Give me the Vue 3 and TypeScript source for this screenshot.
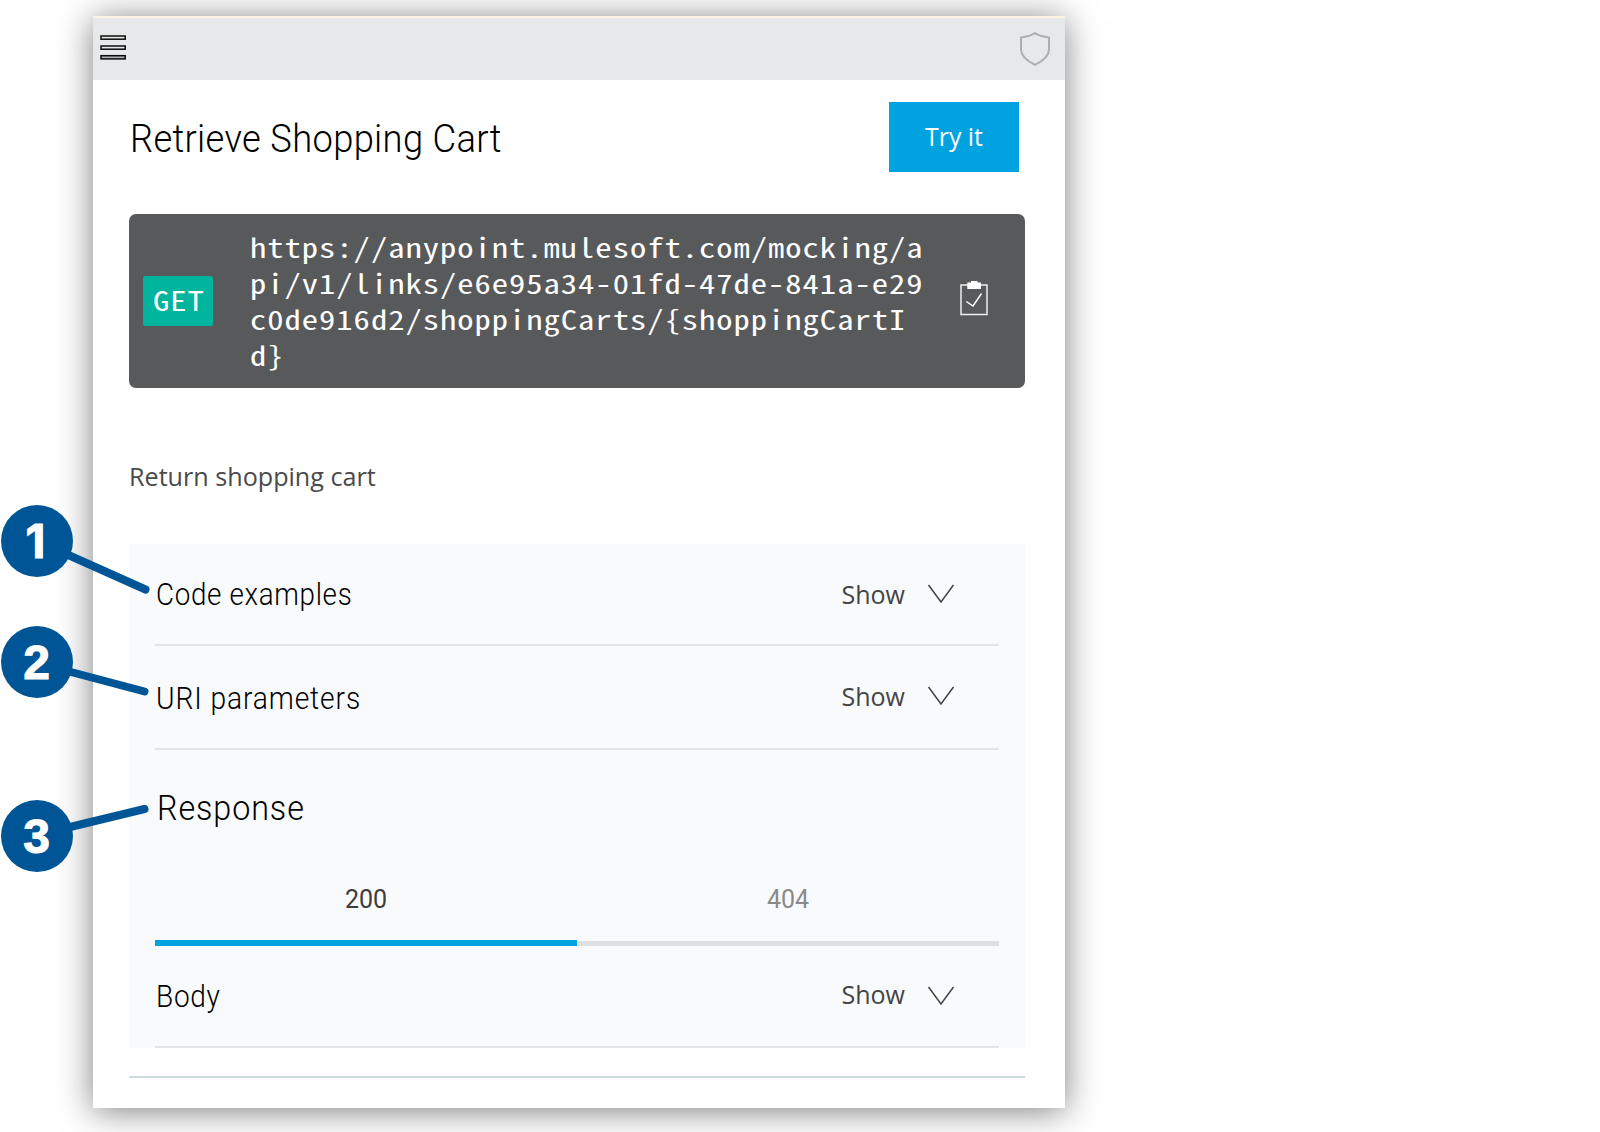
<script setup lang="ts">
interface Callout {
  label: string
  x: number
  y: number
  y1: number
  x2: number
  y2: number
}

const callouts: Callout[] = [
  { label: '1', x: 35.5, y: 541, y1: 541, x2: 145.5, y2: 589.5 },
  { label: '2', x: 36.5, y: 662, y1: 663, x2: 144.5, y2: 691.5 },
  { label: '3', x: 36.5, y: 836, y1: 835, x2: 144.5, y2: 809 },
]

const sections: { title: string; kind: string }[] = [
  { title: 'Code examples', kind: 'code' },
  { title: 'URI parameters', kind: 'params' },
]

const uri =
  'https://anypoint.mulesoft.com/mocking/api/v1/links/e6e95a34-01fd-47de-841a-e29c0de916d2/shoppingCarts/{shoppingCartId}'
</script>

<template>
  <div class="page">
    <main class="card">
      <header class="topbar">
        <svg class="menu" width="27" height="26" viewBox="0 0 27 26">
          <g fill="#e4e8e6" stroke="#0c0c0c" stroke-width="1.5">
            <rect x="1" y="1" width="24.2" height="3.2" />
            <rect x="1" y="11" width="24.2" height="3.2" />
            <rect x="1" y="20.7" width="24.2" height="3.2" fill="#b0b3b2" />
          </g>
        </svg>
        <svg class="shield" width="32" height="36" viewBox="0 0 32 36">
          <path
            d="M16 1.2C12 3.8 7 5 2 5.6V17.6C2 24.5 8 29 16 32.8C24 29 30 24.5 30 17.6V5.6C25 5 20 3.8 16 1.2Z"
            fill="none" stroke="#aeaeae" stroke-width="2"
          />
        </svg>
      </header>

      <div class="heading">
        <h1>Retrieve Shopping Cart</h1>
        <button class="try">Try it</button>
      </div>

      <div class="request">
        <span class="method"><span class="verb">GET</span></span>
        <code class="uri">{{ uri }}</code>
        <svg class="clip" width="28" height="36" viewBox="0 0 28 36">
          <rect x="1" y="5" width="26" height="29.5" fill="none" stroke="#eee" stroke-width="1.5" />
          <path d="M7.3 2.5H11V1H17.5V2.5H21V9H7.3Z" fill="#fff" />
          <path d="M6.3 21.5L13 26L21.5 13.5" fill="none" stroke="#fff" stroke-width="1.5" />
        </svg>
      </div>

      <p class="description">Return shopping cart</p>

      <section class="panel">
        <div v-for="s in sections" :key="s.kind" class="row" :class="s.kind">
          <h3>{{ s.title }}</h3>
          <span class="show">Show</span>
          <svg class="chevron" width="28" height="20" viewBox="0 0 28 20">
            <path d="M1.5 1L14 18L26.5 1" fill="none" stroke="#444" stroke-width="1.5" />
          </svg>
        </div>
        <h2>Response</h2>
        <div class="tabs">
          <div class="tab active">200</div>
          <div class="tab">404</div>
        </div>
        <div class="row body">
          <h3>Body</h3>
          <span class="show">Show</span>
          <svg class="chevron" width="28" height="20" viewBox="0 0 28 20">
            <path d="M1.5 1L14 18L26.5 1" fill="none" stroke="#444" stroke-width="1.5" />
          </svg>
        </div>
      </section>
      <hr class="end" />
    </main>

    <svg class="callouts" width="160" height="1132" viewBox="0 0 160 1132">
      <g v-for="c in callouts" :key="c.label">
        <line x1="37" :y1="c.y1" :x2="c.x2" :y2="c.y2" />
        <circle cx="37" :cy="c.y" r="36" />
        <text :x="c.x" :y="c.y + 17" :class="'n' + c.label">{{ c.label }}</text>
      </g>
    </svg>
  </div>
</template>

<style>
body {
  margin: 0;
  background: #fff;
}
</style>

<style scoped>
.page {
  position: relative;
  box-sizing: border-box;
  width: 1600px;
  height: 1132px;
  padding: 16px 0 0 93px;
  overflow: hidden;
  background: #fff;
}
.card {
  box-sizing: border-box;
  width: 972px;
  height: 1092px;
  background: #fff;
  box-shadow: 0 3px 32px rgba(0, 0, 0, 0.5);
}
.topbar {
  box-sizing: border-box;
  height: 64px;
  border-top: 2px solid #fcf3e0;
  background: #e7e8ea;
  display: flex;
  justify-content: space-between;
  align-items: flex-start;
  padding: 14px 14px 0 7px;
}
.menu {
  margin-top: 3px;
}
.heading {
  display: flex;
  justify-content: space-between;
  align-items: flex-start;
  padding: 22px 46px 0 36px;
  height: 112px;
}
h1,
h2,
h3,
p {
  margin: 0;
  white-space: nowrap;
}
h1,
h2,
h3 {
  font-family: Roboto, sans-serif;
  font-weight: 300;
  color: #000;
  transform-origin: left;
}
h1 {
  font-size: 39.5px;
  line-height: 48px;
  margin: 13px 0 0 1px;
  letter-spacing: 0.35px;
  transform: scaleX(0.92);
}
.try {
  width: 130px;
  height: 70px;
  padding: 0 0 2px;
  border: 0;
  background: #00a2df;
  color: #fff;
  font: 24.8px/36px 'Open Sans', sans-serif;
}
.request {
  box-sizing: border-box;
  margin: 0 40px 0 36px;
  width: 896px;
  height: 174px;
  border-radius: 7px;
  background: #58595b;
  color: #fff;
  display: flex;
  align-items: center;
  padding: 0 37.5px 0 14px;
  font-family: 'Noto Sans Mono CJK SC', 'DejaVu Sans Mono', monospace;
  font-size: 26.6px;
}
.method {
  flex: none;
  width: 70px;
  height: 50px;
  border-radius: 2px;
  background: #00b49d;
  line-height: 47px;
}
.verb {
  display: block;
  width: 45px;
  margin-left: 10px;
  letter-spacing: 0.8px;
  transform: scaleX(1.225);
  transform-origin: left;
}
.uri {
  flex: none;
  width: 557px;
  margin: 0 0 0 36.5px;
  font-family: inherit;
  font-size: inherit;
  line-height: 36px;
  letter-spacing: 0.8px;
  word-break: break-all;
  transform: scaleX(1.225);
  transform-origin: left;
}
.clip {
  flex: none;
  margin: -6px 0 0 auto;
}
.description {
  margin: 69px 0 0 36px;
  height: 87px;
  font: 25.15px/38px 'Open Sans', sans-serif;
  color: #4a4a4a;
}
.panel {
  box-sizing: border-box;
  width: 896px;
  height: 504px;
  margin-left: 36px;
  padding: 0 26px;
  background: #f9fafc;
}
.row {
  box-sizing: border-box;
  display: flex;
  align-items: flex-start;
  border-bottom: 2px solid #e3e4e6;
}
.row.code {
  height: 102px;
  padding-top: 31px;
}
.row.params {
  height: 104px;
  padding-top: 31px;
}
.row.body {
  height: 102px;
  padding-top: 29px;
}
h3 {
  width: 685.5px;
  margin-left: 1px;
  font-size: 30.5px;
  line-height: 40px;
  letter-spacing: 0.75px;
  transform: scaleX(0.91);
}
.params h3 {
  margin-top: 2px;
  letter-spacing: 0.95px;
  transform: scaleX(0.925);
}
.body h3 {
  margin-top: 2px;
  transform: scaleX(0.92);
}
.show {
  width: 85.5px;
  font: 25px/38px 'Open Sans', sans-serif;
  color: #444;
}
.chevron {
  margin-top: 9px;
}
.body .chevron {
  margin-top: 11px;
}
h2 {
  box-sizing: border-box;
  height: 118px;
  margin-left: 1.5px;
  padding-top: 36px;
  font-size: 35.5px;
  line-height: 44px;
  letter-spacing: 1px;
  transform: scaleX(0.91);
}
.tabs {
  display: flex;
  margin-top: -8px;
  height: 86px;
}
.tab {
  box-sizing: border-box;
  width: 422px;
  height: 86px;
  padding-top: 24px;
  text-align: center;
  font: 25px/32px Roboto, sans-serif;
  color: #8a8a8a;
  border-bottom: 5px solid #dfe0e1;
}
.tab.active {
  color: #3c3c3e;
  border-bottom: 6px solid #00a2df;
}
.end {
  width: 896px;
  height: 2px;
  margin: 28px 0 0 36px;
  border: 0;
  background: #cedadc;
}
.callouts {
  position: absolute;
  left: 0;
  top: 0;
}
.callouts circle {
  fill: #005596;
}
.callouts line {
  stroke: #005596;
  stroke-width: 8px;
  stroke-linecap: round;
}
.callouts text {
  fill: #fff;
  stroke: #fff;
  stroke-width: 1px;
  font: bold 48px 'Liberation Sans', sans-serif;
  text-anchor: middle;
}
.callouts text.n1 {
  font-family: Inter, sans-serif;
  font-size: 46px;
}
</style>
